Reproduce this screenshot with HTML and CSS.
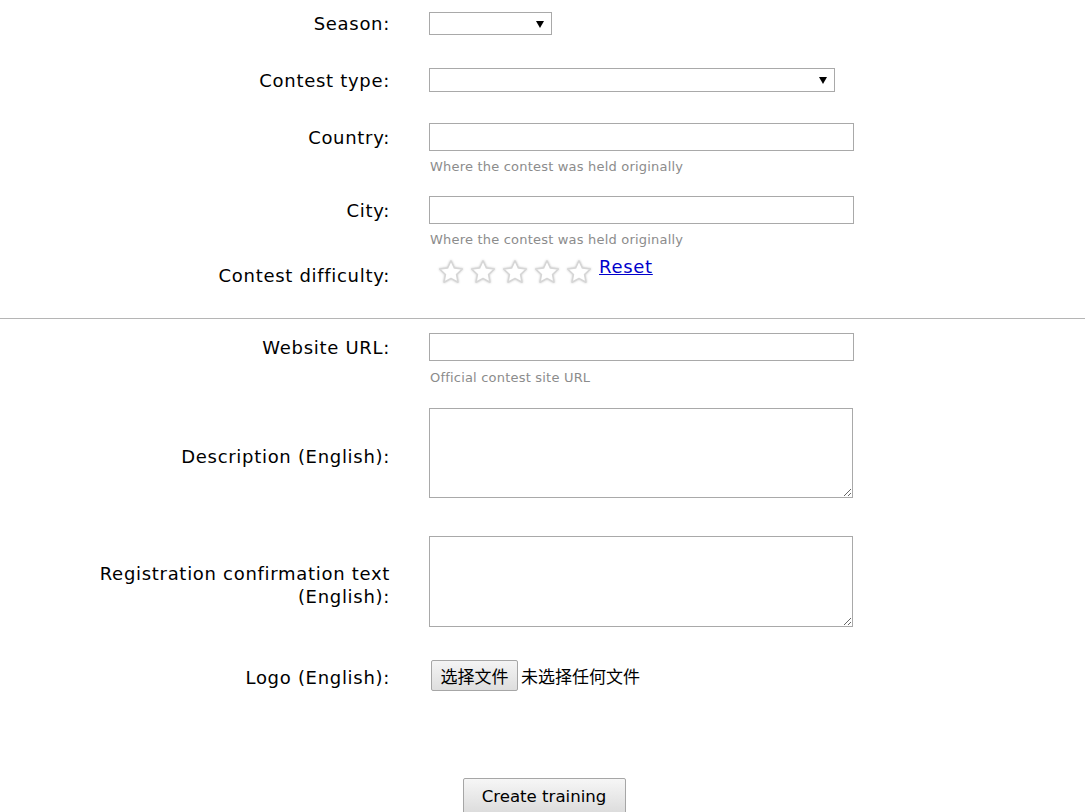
FILE: index.html
```html
<!DOCTYPE html>
<html>
<head>
<meta charset="utf-8">
<link rel="stylesheet" href="styles.css">
</head>
<body>
<form class="form">
  <div class="row r-season">
    <label class="lbl">Season:</label>
    <div class="field"><span class="selwrap season"><select class="sel"></select></span></div>
  </div>
  <div class="row r-type">
    <label class="lbl">Contest type:</label>
    <div class="field"><span class="selwrap ctype"><select class="sel"></select></span></div>
  </div>
  <div class="row r-country">
    <label class="lbl lbl-input">Country:</label>
    <div class="field"><input class="txt" type="text"><div class="hint">Where the contest was held originally</div></div>
  </div>
  <div class="row r-city">
    <label class="lbl lbl-input">City:</label>
    <div class="field"><input class="txt" type="text"><div class="hint">Where the contest was held originally</div></div>
  </div>
  <div class="row r-diff">
    <label class="lbl lbl-diff">Contest difficulty:</label>
    <div class="field stars-field">
      <div class="stars">
        <svg class="star" viewBox="0 0 32 32"><path d="M16 3.2l3.9 8.3 9 1.1-6.6 6.2 1.7 8.9-8-4.4-8 4.4 1.7-8.9-6.6-6.2 9-1.1z"/></svg>
        <svg class="star" viewBox="0 0 32 32"><path d="M16 3.2l3.9 8.3 9 1.1-6.6 6.2 1.7 8.9-8-4.4-8 4.4 1.7-8.9-6.6-6.2 9-1.1z"/></svg>
        <svg class="star" viewBox="0 0 32 32"><path d="M16 3.2l3.9 8.3 9 1.1-6.6 6.2 1.7 8.9-8-4.4-8 4.4 1.7-8.9-6.6-6.2 9-1.1z"/></svg>
        <svg class="star" viewBox="0 0 32 32"><path d="M16 3.2l3.9 8.3 9 1.1-6.6 6.2 1.7 8.9-8-4.4-8 4.4 1.7-8.9-6.6-6.2 9-1.1z"/></svg>
        <svg class="star" viewBox="0 0 32 32"><path d="M16 3.2l3.9 8.3 9 1.1-6.6 6.2 1.7 8.9-8-4.4-8 4.4 1.7-8.9-6.6-6.2 9-1.1z"/></svg>
      </div>
      <a class="reset" href="#">Reset</a>
    </div>
  </div>
  <hr class="sep">
  <div class="row r-url">
    <label class="lbl lbl-input">Website URL:</label>
    <div class="field"><input class="txt" type="text"><div class="hint">Official contest site URL</div></div>
  </div>
  <div class="row r-desc center">
    <label class="lbl">Description (English):</label>
    <div class="field"><textarea class="area"></textarea></div>
  </div>
  <div class="row r-reg center">
    <label class="lbl">Registration confirmation text (English):</label>
    <div class="field"><textarea class="area"></textarea></div>
  </div>
  <div class="row r-logo center">
    <label class="lbl">Logo (English):</label>
    <div class="field file"><button type="button" class="filebtn">选择文件</button><span class="filetxt">未选择任何文件</span></div>
  </div>
  <div class="submit"><button type="button" class="btn">Create training</button></div>
</form>
</body>
</html>
```
FILE: styles.css
```css
html, body {
  margin: 0;
  padding: 0;
  background: #fff;
}
body {
  font-family: "DejaVu Sans", Verdana, sans-serif;
  color: #000;
}
.form {
  display: block;
}
.row {
  display: flex;
  align-items: flex-start;
  column-gap: 39px;
}
.row.center {
  align-items: center;
}
.lbl {
  box-sizing: border-box;
  width: 390px;
  padding-left: 96px;
  padding-top: 1px;
  flex: none;
  text-align: right;
  font-size: 18px;
  line-height: 22px;
  letter-spacing: 0.7px;
}
.lbl-input {
  line-height: 27px;
}
.field {
  flex: none;
}
.r-season { margin-top: 12px; }
.r-type { margin-top: 33px; }
.r-type .lbl { line-height: 23px; }
.r-country { margin-top: 31px; }
.r-city { margin-top: 21px; }
.r-diff { margin-top: 7px; }
.r-url { margin-top: 0; }
.r-desc { margin-top: 22px; }
.r-desc .lbl { padding-top: 6px; line-height: 23px; }
.r-reg { margin-top: 38px; }
.r-logo { margin-top: 33px; }

.selwrap {
  position: relative;
  display: block;
}
.selwrap::after {
  content: "";
  position: absolute;
  right: 8px;
  top: 50%;
  margin-top: -3px;
  border-left: 4px solid transparent;
  border-right: 4px solid transparent;
  border-top: 7px solid #000;
  pointer-events: none;
}
.sel {
  -webkit-appearance: none;
  appearance: none;
  display: block;
  box-sizing: border-box;
  border: 1px solid #a9a9a9;
  border-radius: 0;
  background: #fff;
  margin: 0;
  padding: 0;
}
.season .sel { width: 123px; height: 23px; }
.ctype .sel { width: 406px; height: 24px; }

.txt {
  display: block;
  box-sizing: border-box;
  width: 425px;
  height: 28px;
  margin: 0;
  border: 1px solid #a9a9a9;
  padding: 2px 4px;
  font-size: 14px;
}
.hint {
  font-size: 13px;
  color: #8c8c8c;
  line-height: 16px;
  margin-top: 8px;
  padding-left: 1px;
  letter-spacing: 0.2px;
}
.r-url .hint { margin-top: 9px; }

.r-diff .lbl-diff { line-height: 23px; margin-top: 8px; }
.stars-field {
  display: flex;
  align-items: flex-start;
}
.stars {
  display: flex;
  gap: 4px;
  padding-left: 8px;
  padding-top: 3px;
}
.star {
  width: 28px;
  height: 28px;
  fill: #fff;
  stroke: #d6d6d6;
  stroke-width: 1.7;
  stroke-linejoin: round;
  filter: drop-shadow(0 0 1.2px #c8c8c8);
}
.reset {
  margin-left: 6px;
  font-size: 18px;
  line-height: 23px;
  color: #0000cc;
  text-decoration: underline;
  letter-spacing: 0.7px;
}
.sep {
  border: 0;
  border-top: 1px solid #b5b5b5;
  height: 0;
  margin: 31px 0 14px 0;
}

.area {
  display: block;
  box-sizing: border-box;
  width: 424px;
  height: 90px;
  margin: 0;
  border: 1px solid #a9a9a9;
  resize: both;
}
.r-reg .area { height: 91px; }
.r-reg .lbl { padding-top: 6px; line-height: 23px; }

.file {
  display: flex;
  align-items: center;
  padding-left: 2px;
}
.filebtn {
  box-sizing: border-box;
  height: 31px;
  width: 87px;
  margin: 0;
  padding: 0 4px;
  border: 1px solid #a6a6a6;
  border-radius: 2px;
  background: linear-gradient(#f4f4f4, #dedede);
  font-family: "Noto Sans CJK SC", sans-serif;
  font-size: 17px;
  color: #000;
}
.filetxt {
  margin-left: 3px;
  font-family: "Noto Sans CJK SC", sans-serif;
  font-size: 17px;
}
.r-logo .lbl { line-height: 27px; padding-top: 4px; }

.submit {
  display: flex;
  justify-content: center;
  margin-top: 87px;
  padding-left: 3px;
}
.btn {
  box-sizing: border-box;
  width: 163px;
  height: 36px;
  margin: 0;
  border: 1px solid #a6a6a6;
  border-radius: 2px;
  background: linear-gradient(#f6f6f6, #dcdcdc);
  font-family: "DejaVu Sans", Verdana, sans-serif;
  font-size: 16.6px;
  color: #000;
  padding: 0;
}
```
